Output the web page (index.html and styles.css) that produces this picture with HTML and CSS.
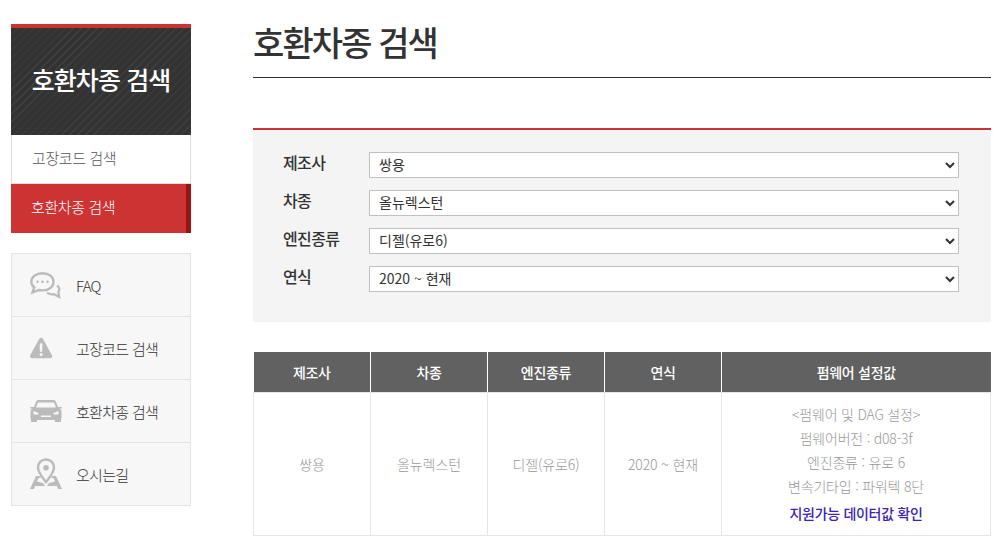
FILE: index.html
```html
<!DOCTYPE html>
<html lang="ko">
<head>
<meta charset="utf-8">
<title>호환차종 검색</title>
<link rel="stylesheet" href="styles.css">
</head>
<body>
<div class="page">
  <aside class="sidebar">
    <h2 class="side-title">호환차종 검색</h2>
    <ul class="side-menu">
      <li class="side-link">고장코드 검색</li>
      <li class="side-link active">호환차종 검색</li>
    </ul>
    <ul class="quick">
      <li class="quick-item">
        <svg class="quick-icon" viewBox="0 0 32 28"><path fill="none" stroke="#bbb" stroke-width="2.400" d="M12.500 2.200c6.500 0 11 3.700 11 8.600s-4.500 8.600-11 8.600c-1.200 0-2.300-.1-3.400-.4L2.500 21.500l1.800-5C2.300 15 1.300 13 1.300 10.800 1.300 5.900 6 2.200 12.500 2.200z"/><circle cx="7.500" cy="10.800" r="1.300" fill="#bbb"/><circle cx="12.500" cy="10.800" r="1.300" fill="#bbb"/><circle cx="17.500" cy="10.800" r="1.300" fill="#bbb"/><path fill="none" stroke="#bbb" stroke-width="2.200" d="M27 14.500c2.500 1.500 3 4.500 1.300 6.500l.9 5-5.200-2.800c-2.600.5-5-.1-7-1.600"/></svg>
        <span>FAQ</span>
      </li>
      <li class="quick-item">
        <svg class="quick-icon" viewBox="3 -2.500 37.600 33"><path fill="#bbb" d="M16 2c1 0 1.800.5 2.300 1.400l10.500 19c1 1.800-.2 3.600-2.200 3.600H5.400c-2 0-3.200-1.800-2.200-3.600l10.500-19C14.200 2.500 15 2 16 2z"/><rect x="14.500" y="8.500" width="3" height="10" rx="1" fill="#f7f7f7"/><circle cx="16" cy="21.800" r="1.800" fill="#f7f7f7"/></svg>
        <span>고장코드 검색</span>
      </li>
      <li class="quick-item">
        <svg class="quick-icon" viewBox="0 0 32 28"><path fill="#bbb" fill-rule="evenodd" d="M8.500 3h15c1.200 0 2 .6 2.400 1.700L28 10h2.500c.8 0 1.500.6 1.500 1.400H29.500c1.500 1 2 2 2 3.500v5.500c0 .8-.2 1.600-.5 2.600v2h-6v-2H7v2H1v-2c-.3-1-.5-1.800-.5-2.600v-5.500c0-1.500.5-2.500 2-3.500H0C0 10.600.7 10 1.500 10H4l2.100-5.300C6.500 3.600 7.300 3 8.500 3zM8 5.500 6 10.500h20l-2-5zM3.500 14v3.500h5V16zM28.500 14l-5 2v1.500h5zM11 18.500V20h10v-1.500z"/></svg>
        <span>호환차종 검색</span>
      </li>
      <li class="quick-item">
        <svg class="quick-icon tall" viewBox="0 0 32 32"><path fill="none" stroke="#bbb" stroke-width="2.400" d="M16 1.500c-5 0-8 3.700-8 8 0 5 4.500 10 8 14.500 3.500-4.500 8-9.500 8-14.500 0-4.300-3-8-8-8z"/><circle cx="16" cy="9.700" r="2.800" fill="#bbb"/><path fill="#bbb" d="M6 18h3.500l1.400 2H8.500L7 23.500l6 1.500 2 3H5l-1 3H0zM26 18h-3.500l-1.400 2h2.400l1.500 3.500-6 1.500-2 3h10l1 3h4z"/></svg>
        <span>오시는길</span>
      </li>
    </ul>
  </aside>
  <main class="content">
    <h1 class="page-title">호환차종 검색</h1>
    <form class="search">
      <div class="field">
        <label class="field-label">제조사</label>
        <select class="field-select"><option>쌍용</option></select>
      </div>
      <div class="field">
        <label class="field-label">차종</label>
        <select class="field-select"><option>올뉴렉스턴</option></select>
      </div>
      <div class="field">
        <label class="field-label">엔진종류</label>
        <select class="field-select"><option>디젤(유로6)</option></select>
      </div>
      <div class="field">
        <label class="field-label">연식</label>
        <select class="field-select"><option>2020 ~ 현재</option></select>
      </div>
    </form>
    <table class="result">
      <colgroup>
        <col class="col-a"><col class="col-a"><col class="col-a"><col class="col-a"><col>
      </colgroup>
      <thead>
        <tr><th>제조사</th><th>차종</th><th>엔진종류</th><th>연식</th><th>펌웨어 설정값</th></tr>
      </thead>
      <tbody>
        <tr>
          <td>쌍용</td>
          <td>올뉴렉스턴</td>
          <td>디젤(유로6)</td>
          <td>2020 ~ 현재</td>
          <td class="detail">
            <p>&lt;펌웨어 및 DAG 설정&gt;</p>
            <p>펌웨어버전 : d08-3f</p>
            <p>엔진종류 : 유로 6</p>
            <p>변속기타입 : 파워텍 8단</p>
            <p class="check">지원가능 데이터값 확인</p>
          </td>
        </tr>
      </tbody>
    </table>
  </main>
</div>
</body>
</html>
```

FILE: styles.css
```css
* { box-sizing: border-box; }
html, body { margin: 0; padding: 0; background: #fff; }
body {
  font-family: "Noto Sans CJK KR", "Noto Sans", sans-serif;
  font-size: 14px;
  color: #333;
  height: 557px;
  overflow: hidden;
}
ul { list-style: none; margin: 0; padding: 0; }
p, h1, h2 { margin: 0; }

.page { display: flex; padding: 24px 17px 0 11px; gap: 62px; }
.sidebar { width: 180px; flex: none; }
.content { flex: 1; min-width: 0; }

.side-title {
  height: 111px;
  border-top: 4px solid #cc3333;
  background-color: #333;
  background-image: repeating-linear-gradient(135deg, #333 0, #333 4.600px, #3f3f3f 4.600px, #3f3f3f 5.600px);
  color: #fff;
  font-size: 25px;
  font-weight: 500;
  letter-spacing: -0.9px;
  text-align: center;
  line-height: 103px;
}
.side-link {
  height: 49px;
  line-height: 46px;
  padding-left: 20px;
  font-size: 15px;
  font-weight: 300;
  letter-spacing: -0.4px;
  color: #555;
  border: 1px solid #ddd;
  border-top: 0;
}
.side-link.active {
  background: #cc3333;
  color: #fff;
  border: 0;
  border-right: 5px solid #9c1515;
  padding-left: 20px;
}
.quick {
  margin-top: 20px;
  border: 1px solid #e5e5e5;
  background: #f7f7f7;
}
.quick-item {
  height: 63px;
  display: flex;
  align-items: center;
  gap: 14px;
  padding-left: 18px;
  font-size: 15px;
  font-weight: 300;
  letter-spacing: -0.7px;
  color: #333;
  border-top: 1px solid #e5e5e5;
}
.quick-item:first-child { border-top: 0; height: 62px; }
.quick-item span { padding-top: 1px; }
.quick-icon { width: 32px; height: 28px; flex: none; }
.quick-icon.tall { height: 32px; }

.page-title {
  height: 54px;
  border-bottom: 1px solid #333;
  font-size: 34px;
  font-weight: 500;
  letter-spacing: -1.900px;
  line-height: 36px;
  color: #333;
}
.search {
  margin-top: 50px;
  height: 194px;
  border-top: 2px solid #cc3333;
  background: #f4f4f4;
  padding: 22px 32px 0 30px;
  display: flex;
  flex-direction: column;
  gap: 12px;
}
.field { display: flex; align-items: flex-start; height: 26px; }
.field-label {
  width: 86px;
  flex: none;
  font-size: 16px;
  font-weight: 500;
  letter-spacing: -0.6px;
  line-height: 20px;
  color: #333;
}
.field-select {
  flex: 1;
  min-width: 0;
  height: 26px;
  border: 1px solid #c0c0c0;
  background: #fff;
  font-family: inherit;
  font-size: 14px;
  color: #333;
  padding: 0 5px 3px;
  border-radius: 0;
}
.result {
  margin-top: 30px;
  width: 738px;
  border-collapse: collapse;
  table-layout: fixed;
}
.col-a { width: 117px; }
.result th {
  height: 40px;
  background: #616161;
  color: #fff;
  font-size: 14px;
  font-weight: 500;
  letter-spacing: -0.3px;
  border-left: 1px solid #fff;
  border-bottom: 1px solid #e5e5e5;
  padding: 0;
}
.result th:first-child { border-left: 0; }
.result td {
  height: 143px;
  border: 1px solid #e5e5e5;
  text-align: center;
  color: #999;
  font-size: 14px;
  font-weight: 300;
  letter-spacing: -0.1px;
  padding: 0;
}
.result td.detail { padding-top: 3px; letter-spacing: -0.2px; }
.detail p { line-height: 24px; }
.detail p.check {
  color: #3a22b8;
  font-weight: 500;
  line-height: 30px;
  letter-spacing: -0.3px;
}
```
